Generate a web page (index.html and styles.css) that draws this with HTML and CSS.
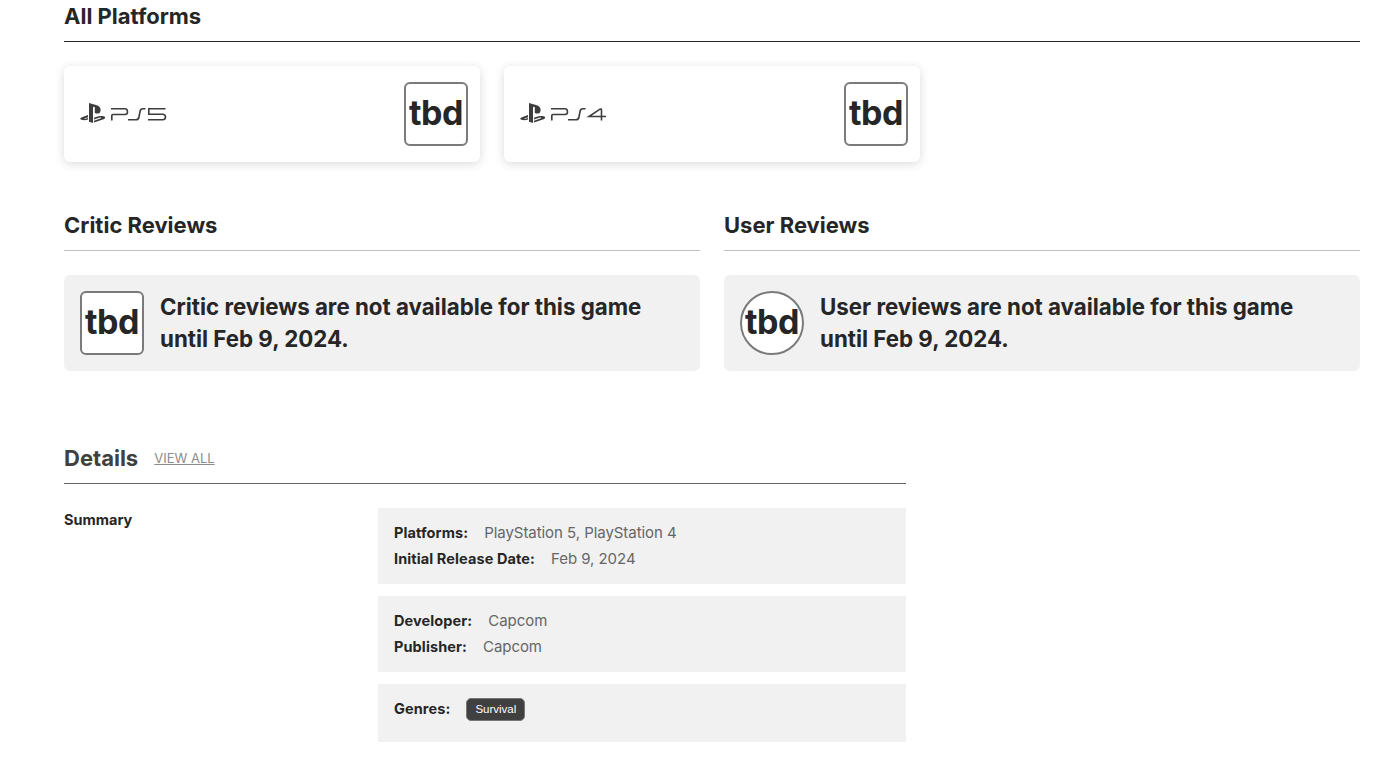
FILE: index.html
```html
<!DOCTYPE html>
<html lang="en">
<head>
    <meta charset="UTF-8">
    <title>Game Details</title>
    <link rel="stylesheet" href="styles.css">
</head>
<body>
    <section class="platforms">
        <h2 class="section-title">All Platforms</h2>
        <div class="platform-list">
            <div class="platform-card">
                <svg class="platform-logo" width="88" height="22" viewBox="0 0 88 22" fill="none">
                    <path fill="#3d3d3d" d="M9 1 L16 3 C20 4.200 21 6.500 20.500 9 C20 11.700 17.500 12.200 14.800 11 L14.800 5.500 C14.800 4.500 13 4.500 13 5.500 L13 21 L9 19.800 Z"/>
                    <path fill="#3d3d3d" d="M8 13 L2 15.200 C-0.500 16.200 0 17.600 2.500 18 C4.300 18.300 6 18.100 8 17.500 L8 15.900 L4.800 17 C3.800 17.200 3.800 16.700 4.600 16.400 L8 15.200 Z"/>
                    <path fill="#3d3d3d" d="M14 20.500 L23.500 17.200 C25.800 16.200 25.800 15 23.500 14.300 C21 13.700 18 14.200 14 15.700 L14 17.500 L20 15.600 C21.300 15.300 21.500 16 20.500 16.400 L14 18.800 Z"/>
                    <g stroke="#3d3d3d" stroke-width="1.600">
                        <path d="M31.800 18.500 V13.500 Q31.800 12.500 33 12.500 H45 Q47.500 12.500 47.500 10 Q47.500 6.800 45 6.800 H31"/>
                        <path d="M48 17.700 H56 Q58.500 17.700 59 15 L60 9.500 Q60.500 6.800 63 6.800 H65.500"/>
                        <path d="M85.500 6.800 H68.800 V12.300 H82.500 Q85.500 12.300 85.500 15 Q85.500 17.700 82.500 17.700 H68"/>
                    </g>
                </svg>
                <div class="score-box">tbd</div>
            </div>
            <div class="platform-card">
                <svg class="platform-logo" width="88" height="22" viewBox="0 0 88 22" fill="none">
                    <path fill="#3d3d3d" d="M9 1 L16 3 C20 4.200 21 6.500 20.500 9 C20 11.700 17.500 12.200 14.800 11 L14.800 5.500 C14.800 4.500 13 4.500 13 5.500 L13 21 L9 19.800 Z"/>
                    <path fill="#3d3d3d" d="M8 13 L2 15.200 C-0.500 16.200 0 17.600 2.500 18 C4.300 18.300 6 18.100 8 17.500 L8 15.900 L4.800 17 C3.800 17.200 3.800 16.700 4.600 16.400 L8 15.200 Z"/>
                    <path fill="#3d3d3d" d="M14 20.500 L23.500 17.200 C25.800 16.200 25.800 15 23.500 14.300 C21 13.700 18 14.200 14 15.700 L14 17.500 L20 15.600 C21.300 15.300 21.500 16 20.500 16.400 L14 18.800 Z"/>
                    <g stroke="#3d3d3d" stroke-width="1.600">
                        <path d="M31.800 18.500 V13.500 Q31.800 12.500 33 12.500 H45 Q47.500 12.500 47.500 10 Q47.500 6.800 45 6.800 H31"/>
                        <path d="M48 17.700 H56 Q58.500 17.700 59 15 L60 9.500 Q60.500 6.800 63 6.800 H65.500"/>
                        <path d="M86 14.500 H69 L80 7.200 Q81.500 6.500 81.500 8 V18.500"/>
                    </g>
                </svg>
                <div class="score-box">tbd</div>
            </div>
        </div>
    </section>

    <section class="reviews">
        <div class="review-col">
            <h2 class="section-title light">Critic Reviews</h2>
            <div class="review-box">
                <div class="score-box">tbd</div>
                <p>Critic reviews are not available for this game until Feb 9, 2024.</p>
            </div>
        </div>
        <div class="review-col">
            <h2 class="section-title light">User Reviews</h2>
            <div class="review-box">
                <div class="score-box round">tbd</div>
                <p>User reviews are not available for this game until Feb 9, 2024.</p>
            </div>
        </div>
    </section>

    <section class="details">
        <div class="details-head">
            <h2>Details</h2>
            <a href="#">VIEW ALL</a>
        </div>
        <div class="summary">
            <div class="summary-label">Summary</div>
            <div class="summary-groups">
                <div class="group">
                    <div class="row"><strong>Platforms:</strong><span>PlayStation 5, PlayStation 4</span></div>
                    <div class="row"><strong>Initial Release Date:</strong><span>Feb 9, 2024</span></div>
                </div>
                <div class="group">
                    <div class="row"><strong>Developer:</strong><span>Capcom</span></div>
                    <div class="row"><strong>Publisher:</strong><span>Capcom</span></div>
                </div>
                <div class="group genres">
                    <div class="row"><strong>Genres:</strong><a class="tag" href="#">Survival</a></div>
                </div>
            </div>
        </div>
    </section>
</body>
</html>
```

FILE: styles.css
```css
body {
    margin: 0;
    padding: 0 39px 20px 64px;
    background: white;
    color: #262626;
    font-family: "Inter", "Liberation Sans", sans-serif;
}
.section-title {
    margin: 0;
    height: 41px;
    line-height: 33px;
    font-size: 22px;
    font-weight: 700;
    border-bottom: 1px solid #262626;
}
.section-title.light {
    border-bottom-color: #bfbfbf;
    height: 50px;
    line-height: 50px;
}
.platform-list {
    display: flex;
    gap: 24px;
    margin-top: 24px;
}
.platform-card {
    width: 416px;
    height: 96px;
    padding: 16px 12px 16px 16px;
    box-sizing: border-box;
    display: flex;
    align-items: center;
    justify-content: space-between;
    background: white;
    border-radius: 6px;
    box-shadow: 0 2px 10px rgba(0,0,0,0.15);
}
.platform-logo {
    margin-bottom: 2px;
}
.score-box {
    width: 64px;
    height: 64px;
    box-sizing: border-box;
    flex-shrink: 0;
    display: flex;
    align-items: center;
    justify-content: center;
    padding-bottom: 4px;
    background: white;
    border: 2px solid #7a7a7a;
    border-radius: 6px;
    font-size: 34px;
    font-weight: 700;
    letter-spacing: -0.5px;
}
.score-box.round {
    border-radius: 50%;
}
.reviews {
    display: grid;
    grid-template-columns: 1fr 1fr;
    gap: 24px;
    margin-top: 38px;
}
.review-box {
    height: 96px;
    margin-top: 24px;
    padding: 0 16px;
    box-sizing: border-box;
    display: flex;
    align-items: center;
    gap: 16px;
    background: #f1f1f1;
    border-radius: 6px;
}
.review-box p {
    margin: 0;
    max-width: 515px;
    padding-bottom: 1px;
    font-size: 22.300px;
    font-weight: 700;
    line-height: 32px;
}
.details {
    margin-top: 70px;
    width: 842px;
}
.details-head {
    height: 43px;
    padding-bottom: 9px;
    box-sizing: border-box;
    display: flex;
    align-items: center;
    gap: 16px;
    border-bottom: 1px solid #666;
}
.details-head h2 {
    margin: 0;
    font-size: 22px;
    font-weight: 700;
    color: #404040;
}
.details-head a {
    font-size: 13px;
    color: #8c8c8c;
}
.summary {
    display: flex;
    margin-top: 24px;
}
.summary-label {
    width: 314px;
    padding-top: 3px;
    font-size: 14.500px;
    font-weight: 700;
}
.summary-groups {
    flex: 1;
    display: flex;
    flex-direction: column;
    gap: 12px;
}
.group {
    height: 76px;
    padding: 11px 16px;
    box-sizing: border-box;
    background: #f1f1f1;
    font-size: 15px;
}
.group.genres {
    height: 58px;
}
.row {
    height: 26px;
    display: flex;
    align-items: center;
    gap: 16px;
}
.row span {
    color: #666;
    letter-spacing: -0.05px;
}
.row strong {
    font-size: 14.500px;
    letter-spacing: 0.1px;
}
.tag {
    margin-top: 2px;
    padding: 4px 8px;
    background: #404040;
    border: 1px solid #777;
    border-radius: 5px;
    color: white;
    font-family: "Liberation Sans", sans-serif;
    font-size: 11.500px;
    line-height: 13px;
    text-decoration: none;
}
```
